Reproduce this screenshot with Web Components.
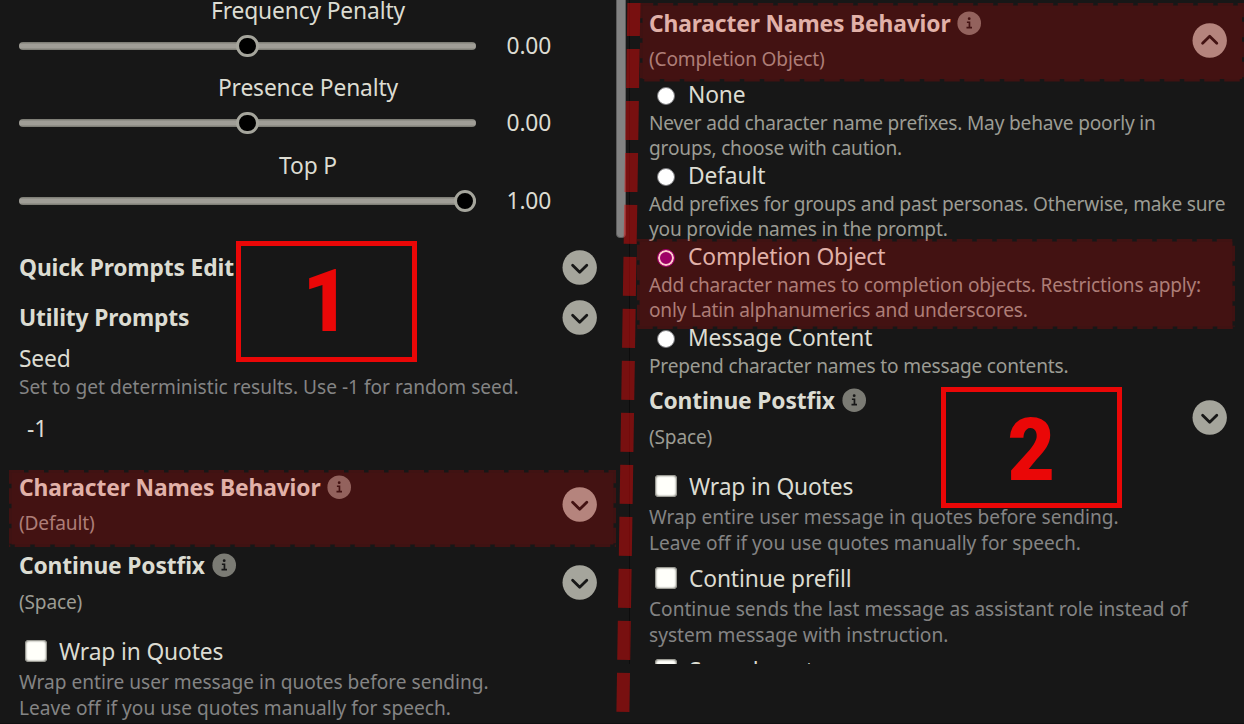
<!DOCTYPE html>
<html lang="en">
<head>
<meta charset="utf-8">
<title>Prompt settings</title>
<style>
html,body{margin:0;height:100%;background:#171717;overflow:hidden}
body{font-family:"Noto Sans","Open Sans",sans-serif;color:#dcdcd2}
</style>
</head>
<body>
<settings-page></settings-page>
<script>
function define(name, render) {
  customElements.define(name, class extends HTMLElement {
    connectedCallback() {
      if (this.shadowRoot) return;
      this.attachShadow({ mode: 'open' }).innerHTML = render(this);
    }
  });
}

define('range-field', el => `
<style>
:host{display:block;height:77px;font-size:22.8px;letter-spacing:-.15px}
.name{height:30px;line-height:30px;text-align:center;white-space:nowrap}
.row{display:flex;align-items:center;height:32px;margin-top:4px}
.track{display:flex;align-items:center;width:457px;height:8px;border-radius:4px;background:linear-gradient(#77776f,#a09e97 30%,#a09e97 70%,#77776f)}
.knob{flex:none;box-sizing:border-box;width:22.5px;height:22.5px;border:3px solid #a5a59c;border-radius:50%;background:#000;margin-left:${el.getAttribute('at')}px}
.value{margin-left:30.5px;line-height:32px}
</style>
<div class="name"><slot></slot></div>
<div class="row"><div class="track"><div class="knob"></div></div><div class="value">${el.getAttribute('value')}</div></div>`);

define('info-badge', () => `
<style>
:host{display:block;flex:none;width:24px;height:24px}
svg{display:block}
</style>
<svg width="24" height="24" viewBox="0 0 24 24"><circle cx="12.2" cy="12.2" r="11.8" fill="#7b7b74"/><g fill="#171717"><circle cx="12.2" cy="7.7" r="1.4"/><path d="M9.9 10.5h3.4v5.3h1.7v1.6H9.5v-1.6h2.1v-3.7H9.9z"/></g></svg>`);

define('toggle-arrow', el => `
<style>
:host{display:block;flex:none;width:35px;height:35px}
svg{display:block}
</style>
<svg width="35" height="35" viewBox="0 0 35 35"><circle cx="17.7" cy="17.5" r="17.2" fill="#a5a59c"/><path d="${el.hasAttribute('up') ? 'M10.6 20.3 17.7 13.2 24.8 20.3' : 'M10.6 15.2 17.7 22.3 24.8 15.2'}" fill="none" stroke="#171717" stroke-width="2.8" stroke-linecap="round" stroke-linejoin="round"/></svg>`);

define('plain-drawer', () => `
<style>
:host{display:flex;align-items:center;justify-content:space-between;height:35px;font-size:22.8px;letter-spacing:-.14px;font-weight:700;white-space:nowrap}
</style>
<span><slot></slot></span><toggle-arrow></toggle-arrow>`);

define('state-drawer', el => `
<style>
:host{display:flex;justify-content:space-between;position:relative;height:78px;white-space:nowrap}
.title{display:flex;align-items:center;gap:7px;height:30px;font-size:22.8px;letter-spacing:-.14px;font-weight:700}
.state{margin-top:${el.getAttribute('gap') || 8}px;height:26px;line-height:26px;font-size:19.1px;letter-spacing:-.18px;color:#9c9c94}
toggle-arrow{margin-top:14.5px}
</style>
<div><div class="title"><span><slot></slot></span><info-badge></info-badge></div><div class="state">${el.getAttribute('state')}</div></div>
<toggle-arrow ${el.hasAttribute('open') ? 'up' : ''}></toggle-arrow><slot name="mark"></slot>`);

define('radio-option', el => `
<style>
:host{display:block;position:relative}
.head{display:flex;align-items:center;height:30px;padding-left:8px;font-size:22.8px;letter-spacing:-.16px;white-space:nowrap}
.dot{box-sizing:border-box;width:18px;height:18px;border-radius:50%;margin:3px 13px 0 0;border:1px solid #77777a;background:#fff}
.dot.on{border-color:#88007f;background:#88007f;box-shadow:inset 0 0 0 2px #fff}
.note{margin:2px 0 -1px;font-size:19.1px;letter-spacing:-.18px;line-height:25px;color:#9c9c94;white-space:nowrap}
</style>
<div class="head"><span class="dot ${el.hasAttribute('on') ? 'on' : ''}"></span><span>${el.getAttribute('label')}</span></div>
<div class="note"><slot></slot></div><slot name="mark"></slot>`);

define('check-option', el => `
<style>
:host{display:block;height:92px}
.head{display:flex;align-items:center;height:30px;padding-left:6px;font-size:22.8px;letter-spacing:-.14px;white-space:nowrap}
.box{box-sizing:border-box;width:21.5px;height:21.5px;border-radius:4px;margin-right:12.5px;background:#fffffa;box-shadow:inset 0 0 2px 1px #77776f}
.note{margin-top:2.5px;font-size:19.12px;line-height:26px;color:#848484;white-space:nowrap}
</style>
<div class="head"><span class="box"></span><span>${el.getAttribute('label')}</span></div>
<div class="note"><slot></slot></div>`);

/* Translucent frame; t, r, b and l place the first gap of each edge */
define('mark-zone', el => {
  const n = k => +el.getAttribute(k);
  const w = n('w'), h = n('h'), d = 2.5, m = d / 2;
  const edge = (x1, y1, x2, y2, first) => `<path d="M${x1} ${y1}L${x2} ${y2}" stroke-dasharray="15.5 4.5" stroke-dashoffset="${(17.75 - first + 20) % 20}"/>`;
  return `
<style>
:host{position:absolute;left:${n('x')}px;top:${n('y')}px;width:${w}px;height:${h}px;z-index:2}
svg{display:block}
</style>
<svg width="${w}" height="${h}"><rect x="${d}" y="${d}" width="${w - 2 * d}" height="${h - 2 * d}" fill="#fa0000" fill-opacity=".195"/>
<g stroke="#fa0000" stroke-opacity=".185" stroke-width="${d}">${edge(0, m, w, m, n('t'))}${edge(0, h - m, w, h - m, n('b'))}${edge(m, d, m, h - d, n('l') - d)}${edge(w - m, d, w - m, h - d, n('r') - d)}</g></svg>`;
});

define('number-tag', () => `
<style>
:host{position:absolute;box-sizing:border-box;display:flex;align-items:center;justify-content:center;width:181px;height:121px;border:5px solid #ea0707;background:#171717;color:#ea0707;z-index:3;font-family:Roboto,"Noto Sans",sans-serif;font-size:87px;font-weight:900;line-height:111px}
span{transform:scaleX(.94)}
</style>
<span><slot></slot></span>`);

define('settings-page', () => `
<style>
:host{position:relative;display:grid;grid-template-columns:629px 615px;width:1244px;height:724px;overflow:hidden;background:#171717}
.left{box-sizing:border-box;display:flex;flex-direction:column;padding:0 32px 0 19px;height:724px;overflow:hidden}
.left>*,.right>*{flex:none}
.left>range-field:first-child{margin-top:-4px}
.seed{margin-top:9px;height:30px;line-height:30px;font-size:22.8px;letter-spacing:-.15px}
.hint{height:26px;line-height:26px;font-size:19.12px;color:#848484;white-space:nowrap}
.input{height:30px;line-height:30px;font-size:22.8px;padding-left:8px;margin:14px 0 28px}
.right{box-sizing:border-box;display:flex;flex-direction:column;height:664px;overflow:hidden;padding:8px 17px 0 19px;border-left:1px solid #0d0d0d}
.scroll{position:absolute;left:616px;top:-10px;width:9.5px;height:248px;box-sizing:border-box;border:1px solid #5c5c5c;border-radius:4px;background:#828282}
.divider{position:absolute;left:0;top:0;z-index:2}
.base{position:absolute;left:0;top:723px;width:1244px;height:1px;background:#101010}
.one{left:236px;top:241px}
.two{left:941px;top:387px;padding-top:6px}
</style>
<div class="left">
<range-field at="217" value="0.00">Frequency Penalty</range-field>
<range-field at="217" value="0.00" style="height:78px">Presence Penalty</range-field>
<range-field at="434.5" value="1.00">Top P</range-field>
<plain-drawer style="margin-top:22px">Quick Prompts Edit</plain-drawer>
<plain-drawer style="margin-top:15px">Utility Prompts</plain-drawer>
<div class="seed">Seed</div>
<div class="hint">Set to get deterministic results. Use -1 for random seed.</div>
<div class="input">-1</div>
<state-drawer state="(Default)" gap="7.5">Character Names Behavior<mark-zone slot="mark" x="-10" y="-2" w="607" h="77" t="17.3" r="15.5" b="23.5" l="16"></mark-zone></state-drawer>
<state-drawer state="(Space)" gap="8.5">Continue Postfix</state-drawer>
<check-option label="Wrap in Quotes" style="margin-top:8px">Wrap entire user message in quotes before sending.<br>Leave off if you use quotes manually for speech.</check-option>
</div>
<div class="right">
<state-drawer open state="(Completion Object)" gap="7.5" style="height:71px">Character Names Behavior<mark-zone slot="mark" x="-9.5" y="-5" w="604.5" h="78.5" t="15.5" r="16.5" b="22" l="17.5"></mark-zone></state-drawer>
<radio-option label="None">Never add character name prefixes. May behave poorly in<br>groups, choose with caution.</radio-option>
<radio-option label="Default">Add prefixes for groups and past personas. Otherwise, make sure<br>you provide names in the prompt.</radio-option>
<radio-option label="Completion Object" on>Add character names to completion objects. Restrictions apply:<br>only Latin alphanumerics and underscores.<mark-zone slot="mark" x="-12" y="-2" w="598" h="90" t="17.5" r="24.5" b="18" l="23.5"></mark-zone></radio-option>
<radio-option label="Message Content">Prepend character names to message contents.</radio-option>
<state-drawer state="(Space)" gap="8.5" style="margin-top:7px">Continue Postfix</state-drawer>
<check-option label="Wrap in Quotes" style="margin-top:8px">Wrap entire user message in quotes before sending.<br>Leave off if you use quotes manually for speech.</check-option>
<check-option label="Continue prefill">Continue sends the last message as assistant role instead of<br>system message with instruction.</check-option>
<check-option label="Squash system messages"></check-option>
</div>
<div class="scroll"></div>
<svg class="divider" width="660" height="724"><path d="M633.9 3 622.9 712" stroke="#d90909" stroke-opacity=".5" stroke-width="13" stroke-dasharray="39 13" stroke-dashoffset="6"/></svg>
<div class="base"></div>
<number-tag class="one">1</number-tag>
<number-tag class="two">2</number-tag>`);
</script>
</body>
</html>
